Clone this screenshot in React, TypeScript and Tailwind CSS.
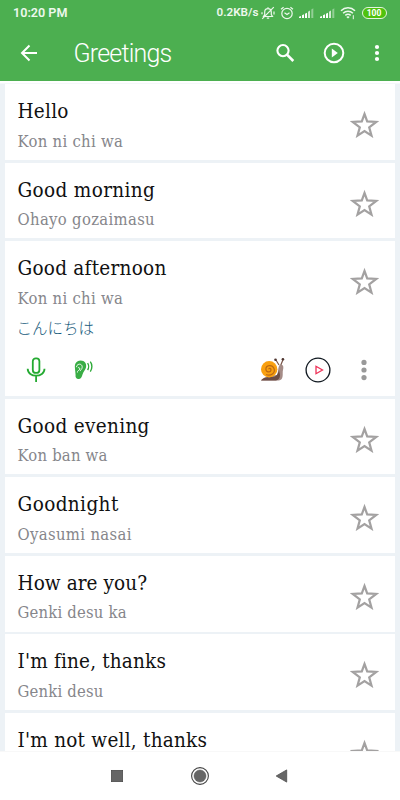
import React from 'react';

type Phrase = {
  en: string;
  jp?: string;
  enSpacing: string;
  jpSpacing?: string;
  kana?: string;
};

const phrases: Phrase[] = [
  { en: 'Hello', jp: 'Kon ni chi wa', enSpacing: 'tracking-[0.25px]', jpSpacing: 'tracking-[0.3px]' },
  { en: 'Good morning', jp: 'Ohayo gozaimasu', enSpacing: 'tracking-[0.35px]', jpSpacing: 'tracking-[0.33px]' },
  { en: 'Good afternoon', jp: 'Kon ni chi wa', enSpacing: 'tracking-[0.25px]', jpSpacing: 'tracking-[0.3px]', kana: 'こんにちは' },
  { en: 'Good evening', jp: 'Kon ban wa', enSpacing: 'tracking-[0.33px]', jpSpacing: 'tracking-[0.2px]' },
  { en: 'Goodnight', jp: 'Oyasumi nasai', enSpacing: 'tracking-[0.4px]', jpSpacing: 'tracking-[0.35px]' },
  { en: 'How are you?', jp: 'Genki desu ka', enSpacing: 'tracking-[0.08px]', jpSpacing: 'tracking-[0.2px]' },
  { en: "I'm fine, thanks", jp: 'Genki desu', enSpacing: 'tracking-[0.18px]', jpSpacing: 'tracking-[0.2px]' },
  { en: "I'm not well, thanks", enSpacing: 'tracking-[0.24px]' },
];

function Signal() {
  return (
    <svg width="16" height="12" viewBox="0 0 16 12" fill="#fff">
      <path d="M0 9.8l2-.8v2H0zM3 8.3l2-1V11H3zM6 6.8l2-1V11H6z" />
      <path d="M9 4.8l2-1.2V11H9z" opacity=".75" />
      <path d="M12.3 2.4l2-1.2V11h-2z" opacity=".4" />
    </svg>
  );
}

function StatusBar() {
  return (
    <div className="flex h-[25px] items-center pl-[13px] text-[#edf8ed]">
      <span className="w-[203.5px] text-[12.6px] font-semibold leading-[25px]">10:20 PM</span>
      <span className="w-[43.5px] whitespace-nowrap text-[11.7px] font-semibold leading-[25px]">0.2KB/s</span>
      <svg className="ml-[1px]" width="14" height="14" viewBox="0 0 14 14" fill="none" stroke="currentColor" strokeWidth="1.2">
        <path d="M2.5 10.5h9L10.3 8.5V6C10.3 3.8 9 2.7 7 2.7S3.7 3.8 3.7 6v2.5zM5.8 12.2h2.4M7 2.7V1.2M1.2 12.8L12.8 1.2M1 6.3v2M13 5.5v3" />
      </svg>
      <svg className="ml-[5px]" width="14" height="14" viewBox="0 0 14 14" fill="none" stroke="currentColor" strokeWidth="1.2">
        <circle cx="7" cy="7.5" r="5.2" />
        <path d="M4.5 6.8L7 8.6l2.5-1.8M1 3.3L3.6 1.2M10.4 1.2L13 3.3" />
      </svg>
      <div className="ml-[5px] flex gap-[5px]">
        <Signal />
        <Signal />
      </div>
      <svg className="ml-[4px]" width="16" height="14" viewBox="0 0 16 14" fill="none" stroke="currentColor" strokeWidth="1.5">
        <path d="M1 4.7C5 .9 11 .9 15 4.7M3.1 7.2c2.8-2.6 7-2.6 9.8 0M5.3 9.4c1.6-1.4 3.8-1.4 5.4 0" />
        <path d="M6.3 10.9L8 12.6l1.7-1.7C8.8 10 7.2 10 6.3 10.9z" fill="currentColor" stroke="none" />
        <path d="M13.3 9.2v4" strokeWidth="1" />
      </svg>
      <span className="ml-[5.5px] flex h-[12px] w-[25px] items-center justify-center rounded-full border border-[#e4f4df] bg-[#4fc20e] pt-[1px] text-[8.5px] font-bold leading-none text-white">
        100
      </span>
    </div>
  );
}

function AppBar() {
  return (
    <div className="flex h-[56px] items-center text-white">
      <svg className="ml-[20px]" width="18" height="18" viewBox="0 0 18 18" fill="none" stroke="currentColor" strokeWidth="2">
        <path d="M17 9H2.2M9.5 1.5L2 9l7.5 7.5" />
      </svg>
      <h1 className="ml-[35.5px] w-[201.5px] pt-[1px] text-[25px] font-light leading-[32px] tracking-[-0.8px]">Greetings</h1>
      <svg width="20" height="20" viewBox="0 0 20 20" fill="none" stroke="currentColor" strokeWidth="2.1">
        <circle cx="8" cy="7.6" r="5.6" />
        <path d="M12 11.7l6.3 6.3" strokeWidth="2.6" />
      </svg>
      <svg className="ml-[27.5px]" width="22" height="22" viewBox="0 0 22 22" fill="none" stroke="currentColor" strokeWidth="2">
        <circle cx="11" cy="11" r="9.3" />
        <path d="M8.8 6.5v9l6-4.5z" fill="currentColor" stroke="none" />
      </svg>
      <svg className="ml-[29px]" width="6" height="18" viewBox="0 0 6 18" fill="currentColor">
        <circle cx="3" cy="3" r="2.1" />
        <circle cx="3" cy="9" r="2.1" />
        <circle cx="3" cy="15" r="2.1" />
      </svg>
    </div>
  );
}

function Star() {
  return (
    <svg className="mt-[26px] mr-[16px] shrink-0" width="29" height="28" viewBox="0 0 29 28" fill="none" stroke="#a3a1a1" strokeWidth="2.2">
      <path d="M14.5 4l2.7 7.4 9 .5-7 5.4 2.3 8.3-7-4.6-7 4.6 2.3-8.3-7-5.4 9-.5z" />
    </svg>
  );
}

function Snail() {
  return (
    <svg width="26" height="26" viewBox="0 0 26 26">
      <path d="M1 23.5c1-2 4-3.2 7-4.5l9-1c1.2-2.5 1-6.5 2-9 .5-1.7 3.8-1.7 4.2.3.6 2.5-.7 4-.5 7 .2 3.7-.5 7.2-4.2 7.2z" fill="#a58c87" />
      <path d="M1 23.5c2-3 7-3.5 11-3.5 4.5 0 6-3 7-7l1 5c0 3-1 4.5-4 5.5z" fill="#6c4c44" />
      <path d="M19 8L15.8 2.8M20.8 8L23 2.8" stroke="#795548" strokeWidth="1.2" />
      <circle cx="15.5" cy="2.7" r="1.3" fill="#4e342e" />
      <circle cx="22.9" cy="2.2" r="1.3" fill="#4e342e" />
      <circle cx="9.2" cy="12.3" r="8.2" fill="#f9a010" />
      <path d="M8.8 12.2c0-1.6 2.5-1 2.2.9-.4 2.7-5 2.4-5.1-.9-.1-4 6.1-5 8-.9 2.1 5-3.5 8-7.7 6.2" fill="none" stroke="#bc6812" strokeWidth="1.2" />
    </svg>
  );
}

function Actions() {
  return (
    <div className="flex h-[40px] items-center">
      <svg className="ml-[8.5px]" width="20" height="26" viewBox="0 0 20 26" fill="none" stroke="#25aa32" strokeWidth="1.8">
        <rect x="6.8" y="1.3" width="6.6" height="14.6" rx="3" />
        <path d="M1.7 11.7c0 9.3 16.8 9.3 16.8 0M10.1 18.8v6.2" />
      </svg>
      <svg className="ml-[28px]" width="21" height="22" viewBox="0 0 21 22" fill="none">
        <path d="M.9 8.7C.4 4.3 2.9 1.4 6.6 1.4c4.3 0 6 3 5.5 6.6-.5 3.2-2.8 4.5-3.6 7.4-.7 2.7-2 5.2-4.6 4.6-1.8-.4-2.8-2-2.3-3.9z" fill="#39ad45" />
        <path d="M2.4 8.2C2.9 4 8.4 4.3 8.2 8.2c-.1 2.2-1.8 2.5-2 3.9M3.9 8.8c1.3-.7 2.6.6 1.5 2-.8 1-2.2.7-2 2.7" stroke="#fff" strokeWidth=".9" />
        <path d="M13.6 4.2c1.3 1.8 1.3 5 0 6.8M16.3 2.6c2.1 2.8 2.1 7.2 0 10" stroke="#2eaa39" strokeWidth="1.4" />
      </svg>
      <div className="ml-[165.5px]">
        <Snail />
      </div>
      <svg className="ml-[17.5px]" width="28" height="28" viewBox="0 0 28 28" fill="none">
        <circle cx="14" cy="14" r="11.9" stroke="#101820" strokeWidth="1.3" />
        <path d="M12 10.3v7.4l6.5-3.7z" stroke="#ef3157" strokeWidth="1.3" />
      </svg>
      <svg className="ml-[28px]" width="8" height="24" viewBox="0 0 8 24" fill="#999">
        <circle cx="4" cy="4.4" r="2.6" />
        <circle cx="4" cy="12" r="2.6" />
        <circle cx="4" cy="19.6" r="2.6" />
      </svg>
    </div>
  );
}

function PhraseCard({ phrase }: { phrase: Phrase }) {
  return (
    <div className={`shrink-0 overflow-hidden bg-white ${phrase.kana ? 'h-[154.7px]' : 'h-[75.8px]'}`}>
      <div className="flex justify-between pl-[12.5px]">
        <div className="pt-[14px]">
          <p className={`whitespace-nowrap font-['Roboto_Slab','DejaVu_Serif_Condensed','DejaVu_Serif',serif] text-[20.5px] leading-[26px] text-[#111] [font-stretch:condensed] ${phrase.enSpacing}`}>{phrase.en}</p>
          {phrase.jp && (
            <p className={`mt-[4.5px] whitespace-nowrap font-['Roboto_Slab','DejaVu_Serif_Condensed','DejaVu_Serif',serif] text-[16.5px] leading-[25px] text-[#86868b] [font-stretch:condensed] ${phrase.jpSpacing}`}>{phrase.jp}</p>
          )}
          {phrase.kana && (
            <p className="-ml-[1px] mt-[4px] font-['Noto_Sans_CJK_JP',sans-serif] text-[15.5px] font-light leading-[25px] text-[#185b7c]">{phrase.kana}</p>
          )}
        </div>
        <Star />
      </div>
      {phrase.kana && (
        <div className="mt-[10px] pl-[12px]">
          <Actions />
        </div>
      )}
    </div>
  );
}

function NavBar() {
  return (
    <div className="flex h-[49px] shrink-0 items-start border-t border-[#f8f8f8] bg-white pt-[14px]">
      <svg className="ml-[106px]" width="20" height="20" viewBox="0 0 20 20">
        <rect x="5.4" y="4.4" width="11.2" height="11.2" fill="#666" stroke="#4d4d4d" strokeWidth=".8" />
      </svg>
      <svg className="ml-[64px]" width="20" height="20" viewBox="0 0 20 20">
        <circle cx="10" cy="10" r="8.4" fill="none" stroke="#444" strokeWidth="1.1" />
        <circle cx="10" cy="10" r="6" fill="#666" stroke="#555" strokeWidth=".5" />
      </svg>
      <svg className="ml-[62px]" width="20" height="20" viewBox="0 0 20 20">
        <path d="M4.2 10L14.7 3.9v12.2z" fill="#666" stroke="#4d4d4d" strokeWidth=".8" />
      </svg>
    </div>
  );
}

export default function App() {
  return (
    <div className="flex h-[800px] w-[400px] flex-col overflow-hidden bg-[#edf2f6] font-['Roboto',sans-serif]">
      <header className="h-[81px] shrink-0 bg-[#4caf50]">
        <StatusBar />
        <AppBar />
      </header>
      <div className="h-[3px] shrink-0 border-b border-[#f5f8fa] bg-white" />
      <main className="flex min-h-0 flex-1 flex-col gap-[2.8px] overflow-hidden px-[5px]">
        {phrases.map((phrase) => (
          <PhraseCard key={phrase.en} phrase={phrase} />
        ))}
      </main>
      <NavBar />
    </div>
  );
}
